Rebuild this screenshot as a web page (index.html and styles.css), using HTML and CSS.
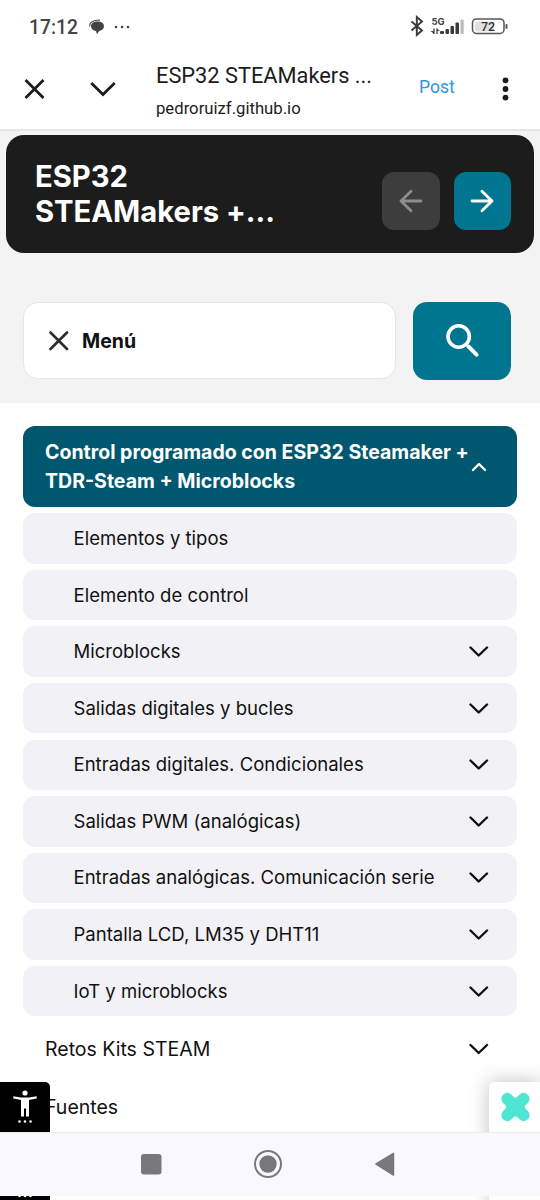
FILE: index.html
```html
<!DOCTYPE html>
<html lang="es">

<head>
    <meta charset="UTF-8">
    <meta name="viewport" content="width=device-width, initial-scale=1.0">
    <title>ESP32 STEAMakers</title>
    <link rel="stylesheet" href="styles.css">
</head>

<body>
    <div class="status-bar">
        <span class="clock">17:12</span>
        <svg class="chat" width="16" height="16" viewBox="0 0 16 16">
            <path d="M8.500 2.500C12.500 2.500 15 4.500 15 7.300C15 9.800 13 11.500 10.200 12L8 15.200L7 12C4 11.500 2 10 2 7.300C2 4.500 4.500 2.500 8.500 2.500Z" fill="#444" />
            <path d="M.8 7.500C0 3.500 4 1 11 1.200" fill="none" stroke="#555" stroke-width="1.200" />
        </svg>
        <svg class="more" width="16" height="4" viewBox="0 0 16 4" fill="#444">
            <circle cx="2" cy="2" r="1.300" /><circle cx="8" cy="2" r="1.300" /><circle cx="14" cy="2" r="1.300" />
        </svg>
        <svg class="signals" width="100" height="24" viewBox="0 0 100 24">
            <path d="M2.500 6.500L13 15.500L7.800 20V2L13 6.500L2.500 15.500" fill="none" stroke="#3a3a3a" stroke-width="1.900" />
            <text x="22.500" y="9.500" class="network">5G</text>
            <path d="M25 13.500v5.500M28 13.500v5.500" stroke="#444" stroke-width="1.300" />
            <path d="M21.500 16h3.500V19zM31 16h-3V13.500z" fill="#444" />
            <g fill="#3a3a3a">
                <rect x="31" y="16" width="4" height="3" rx="1" />
                <rect x="36.500" y="14" width="3.500" height="5" rx="1" />
                <rect x="41.500" y="11" width="3.500" height="8" rx="1" />
                <rect x="46.500" y="7.500" width="3.500" height="11.500" rx="1" />
                <rect x="51.500" y="4.500" width="3.200" height="14.500" rx="1" fill="#bbb" />
            </g>
            <rect x="63.500" y="3.900" width="31.500" height="14.600" rx="4" fill="#fff" stroke="#555" stroke-width="1.500" />
            <rect x="66" y="6.400" width="19" height="10" rx="2" fill="#e0e0e0" />
            <rect x="96.500" y="9" width="2" height="5" rx="1" fill="#555" />
            <text x="79" y="15.700" class="battery" text-anchor="middle">72</text>
        </svg>
    </div>

    <header class="browser-bar">
        <svg class="close" width="22" height="22" viewBox="0 0 22 22">
            <path d="M1.500 1L19.500 19M19.500 1L1.500 19" />
        </svg>
        <svg class="collapse" width="26" height="16" viewBox="0 0 26 16">
            <path d="M1.300 1L13 12.500L24.700 1" />
        </svg>
        <div class="address">
            <div class="page-title">ESP32 STEAMakers ...</div>
            <div class="page-url">pedroruizf.github.io</div>
        </div>
        <span class="post">Post</span>
        <svg class="kebab" width="8" height="26" viewBox="0 0 8 26" fill="#1c1c1c">
            <circle cx="4.500" cy="3.300" r="2.900" /><circle cx="4.500" cy="12" r="2.900" /><circle cx="4.500" cy="20.600" r="2.900" />
        </svg>
    </header>

    <section class="top">
        <div class="site-header">
            <h1>ESP32<br>STEAMakers +...</h1>
            <div class="arrow prev">
                <svg width="24" height="24" viewBox="0 0 24 24"><path d="M22 12H2M12 2.200L2 12L12 21.800" /></svg>
            </div>
            <div class="arrow next">
                <svg width="24" height="24" viewBox="0 0 24 24"><path d="M2 12H22M12 2.200L22 12L12 21.800" /></svg>
            </div>
        </div>
        <div class="tools">
            <div class="menu-btn">
                <svg width="20" height="20" viewBox="0 0 20 20"><path d="M1.500 1.500L18 18M18 1.500L1.500 18" /></svg>
                <span>Menú</span>
            </div>
            <div class="search-btn">
                <svg width="34" height="34" viewBox="0 0 34 34">
                    <circle cx="13.700" cy="12.500" r="10.700" stroke-width="3.600" />
                    <path d="M23.500 22.500L31.500 30.700" stroke-width="4" />
                </svg>
            </div>
        </div>
    </section>

    <main>
        <div class="item active">
            <span>Control programado con ESP32 Steamaker +<br>TDR-Steam + Microblocks</span>
            <svg class="up" width="16" height="10" viewBox="0 0 16 10"><path d="M2 8L8 2L14 8" /></svg>
        </div>
        <ul id="submenu">
            <li class="item"><span>Elementos y tipos</span></li>
            <li class="item"><span>Elemento de control</span></li>
            <li class="item"><span>Microblocks</span><svg class="down" width="20" height="12" viewBox="0 0 20 12"><path d="M1.500 2.500L9.700 10.500L18 2.500" /></svg></li>
            <li class="item"><span>Salidas digitales y bucles</span><svg class="down" width="20" height="12" viewBox="0 0 20 12"><path d="M1.500 2.500L9.700 10.500L18 2.500" /></svg></li>
            <li class="item"><span>Entradas digitales. Condicionales</span><svg class="down" width="20" height="12" viewBox="0 0 20 12"><path d="M1.500 2.500L9.700 10.500L18 2.500" /></svg></li>
            <li class="item"><span>Salidas PWM (analógicas)</span><svg class="down" width="20" height="12" viewBox="0 0 20 12"><path d="M1.500 2.500L9.700 10.500L18 2.500" /></svg></li>
            <li class="item"><span>Entradas analógicas. Comunicación serie</span><svg class="down" width="20" height="12" viewBox="0 0 20 12"><path d="M1.500 2.500L9.700 10.500L18 2.500" /></svg></li>
            <li class="item"><span>Pantalla LCD, LM35 y DHT11</span><svg class="down" width="20" height="12" viewBox="0 0 20 12"><path d="M1.500 2.500L9.700 10.500L18 2.500" /></svg></li>
            <li class="item"><span>IoT y microblocks</span><svg class="down" width="20" height="12" viewBox="0 0 20 12"><path d="M1.500 2.500L9.700 10.500L18 2.500" /></svg></li>
        </ul>
        <div class="item plain"><span>Retos Kits STEAM</span><svg class="down" width="20" height="12" viewBox="0 0 20 12"><path d="M1.500 2L9.700 10L18 2" /></svg></div>
        <div class="item plain"><span>Fuentes</span></div>
    </main>

    <!-- floating buttons -->
    <div class="access">
        <svg width="24" height="34" viewBox="0 0 24 34" fill="#fff">
            <circle cx="12" cy="3" r="2.600" />
            <path d="M.3 6.200L8 7.500H16L23.700 6.200V8.500L16 10V26.500H13V18.500H11V26.500H8V10L.3 8.500Z" />
            <circle cx="6.500" cy="31.500" r="1.300" /><circle cx="12" cy="31.500" r="1.300" /><circle cx="17.500" cy="31.500" r="1.300" />
        </svg>
    </div>
    <div class="widget">
        <svg width="30" height="30" viewBox="0 0 30 30">
            <g fill="#4ee5d2">
                <rect x="-2" y="9" width="35" height="12" rx="6" transform="rotate(45 15.500 15)" />
                <rect x="-2" y="9" width="35" height="12" rx="6" transform="rotate(-45 15.500 15)" />
                <circle cx="15.500" cy="15" r="9.500" />
            </g>
        </svg>
    </div>

    <nav class="android-nav">
        <svg width="540" height="64" viewBox="0 0 540 64">
            <rect x="141" y="22" width="20.500" height="20.500" rx="3" fill="#78787b" />
            <circle cx="268" cy="32" r="13" fill="none" stroke="#78787b" stroke-width="2" />
            <circle cx="268" cy="32" r="8.700" fill="#78787b" />
            <path d="M376 32L393.500 21.500V43Z" fill="#78787b" stroke="#78787b" stroke-width="1.500" stroke-linejoin="round" />
        </svg>
    </nav>
    <div class="peek">
        <svg width="24" height="2" viewBox="0 0 24 2" fill="#fff">
            <circle cx="6.500" cy="0" r="1.300" /><circle cx="12" cy="0" r="1.300" /><circle cx="17.500" cy="0" r="1.300" />
        </svg>
    </div>
</body>

</html>
```
FILE: styles.css
```css
* {
    box-sizing: border-box;
}

body {
    margin: 0;
    width: 540px;
    height: 1200px;
    position: relative;
    overflow: hidden;
    background-color: #fff;
    font-family: Inter, "Liberation Sans", sans-serif;
    color: #111;
}

svg {
    display: block;
    flex-shrink: 0;
}

.status-bar {
    height: 51px;
    padding: 2px 31px 0 29px;
    display: flex;
    align-items: center;
}

.clock {
    width: 60px;
    margin-top: 1px;
    font: 500 19.3px Roboto, sans-serif;
    color: #444;
}

.more {
    margin-left: 9px;
}

.signals {
    margin-left: auto;
}

.network {
    font: bold 9.5px Inter, sans-serif;
    fill: #444;
}

.battery {
    font: 500 12.5px Roboto, sans-serif;
    fill: #333;
}

.browser-bar {
    height: 78px;
    padding-left: 24px;
    display: flex;
    align-items: center;
}

.close path,
.collapse path {
    fill: none;
    stroke: #1c1c1c;
    stroke-width: 2.8;
}

.collapse {
    margin-left: 44px;
}

.address {
    width: 263px;
    margin: 2px 0 0 40px;
    color: #1c1c1c;
    white-space: nowrap;
}

.page-title {
    font: 21.8px/30px Roboto, sans-serif;
}

.page-url {
    margin-top: 6px;
    font: 16.7px/24px Roboto, sans-serif;
}

.post {
    width: 82px;
    margin-top: -6px;
    font: 17.6px/24px Roboto, sans-serif;
    color: #3295dc;
}

.top {
    height: 274px;
    padding: 4px 6px 0;
    border-top: 2px solid #e1e7ec;
    background-color: #f3f3f3;
}

.site-header {
    height: 118px;
    padding: 14px 23px 0 29px;
    border-radius: 18px;
    background-color: #1c1c1c;
    display: flex;
    align-items: center;
}

h1 {
    margin: -14px auto 0 0;
    font-size: 29.2px;
    line-height: 35px;
    color: #fff;
}

.arrow {
    width: 57.5px;
    height: 58px;
    margin-left: 14px;
    border-radius: 12px;
    background-color: #3d3d3d;
    display: flex;
    align-items: center;
    justify-content: center;
}

.arrow path {
    fill: none;
    stroke: #8d8d8d;
    stroke-width: 2.8;
    stroke-linecap: round;
    stroke-linejoin: round;
}

.next {
    background-color: #00758f;
}

.next path {
    stroke: #fff;
}

.tools {
    margin: 49px 23px 0 17px;
    display: flex;
    align-items: center;
    justify-content: space-between;
}

.menu-btn {
    width: 373px;
    height: 77px;
    margin-top: -1px;
    padding-left: 25px;
    border: 1px solid #e6e6e6;
    border-radius: 15px;
    background-color: #fff;
    display: flex;
    align-items: center;
    gap: 13px;
    font-size: 19.5px;
    font-weight: 700;
}

.menu-btn path {
    stroke: #2d2d2d;
    stroke-width: 2.6;
    stroke-linecap: round;
}

.search-btn {
    width: 98px;
    height: 78px;
    border-radius: 14px;
    background-color: #00758f;
    display: flex;
    align-items: center;
    justify-content: center;
}

.search-btn svg {
    fill: none;
    stroke: #fff;
    stroke-linecap: round;
}

main {
    padding: 23px 23px 0;
}

.item {
    height: 50.4px;
    padding: 0 28.5px 1px 50.5px;
    border-radius: 12px;
    background-color: #f2f1f6;
    display: flex;
    align-items: center;
    justify-content: space-between;
    font-size: 18.55px;
    white-space: nowrap;
}

.item path {
    fill: none;
    stroke: #111;
    stroke-width: 2.4;
    stroke-linecap: round;
    stroke-linejoin: round;
}

.active {
    height: 81px;
    padding: 1px 30.5px 0 22px;
    background-color: #005770;
    font-size: 19.55px;
    font-weight: 700;
    line-height: 29px;
    color: #fff;
}

.active span {
    width: 0;
}

.active path {
    stroke: #fff;
}

#submenu {
    list-style: none;
    margin: 6.3px 0;
    padding: 0;
    display: flex;
    flex-direction: column;
    gap: 6.2px;
}

.plain {
    height: 58px;
    padding: 1px 28.5px 0 22px;
    background: none;
    font-size: 19.5px;
}

#submenu + .plain {
    margin-top: -3px;
}

.access {
    position: absolute;
    left: 0;
    top: 1082px;
    width: 50px;
    height: 52px;
    padding: 8px 13px;
    border-top-right-radius: 5px;
    background-color: #000;
}

.widget {
    position: absolute;
    right: 0;
    top: 1082px;
    width: 51px;
    height: 120px;
    padding: 10px 11px;
    border-top-left-radius: 5px;
    background-color: #fff;
    box-shadow: 0 0 20px rgba(0, 0, 0, 0.25);
}

.android-nav {
    position: absolute;
    left: 0;
    top: 1132px;
    width: 540px;
    height: 64px;
    background-color: #f8f8fe;
    box-shadow: inset 0 1px #ebebf1;
}

.peek {
    position: absolute;
    left: 0;
    top: 1196px;
    width: 50px;
    height: 4px;
    padding-left: 13px;
    background-color: #000;
}
```
